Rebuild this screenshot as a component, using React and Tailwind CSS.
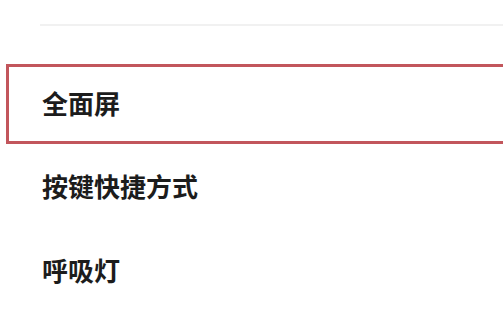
export default function App() {
  const items = [
    { label: "全面屏", active: true },
    { label: "按键快捷方式" },
    { label: "呼吸灯" },
  ];

  return (
    <div
      className="w-[503px] h-[325px] overflow-hidden bg-white"
      style={{ fontFamily: '"Noto Sans CJK SC", "Noto Sans", sans-serif' }}
    >
      {/* divider from the previous group */}
      <div className="pt-6 pl-10">
        <div className="h-[2px] bg-[#f1f1f1]" />
      </div>

      <div className="pt-[38px] pl-[6px]">
        {items.map((item) => (
          <div
            key={item.label}
            className={
              item.active
                ? "h-[80px] -mr-4 flex items-center pl-[33px] pb-[2px] border-[3px] border-[#c2565c]"
                : "h-[84px] flex items-center pl-[36px]"
            }
          >
            <span className="text-[26px] font-bold text-[#1c1c1c] leading-none">
              {item.label}
            </span>
          </div>
        ))}
      </div>
    </div>
  );
}
